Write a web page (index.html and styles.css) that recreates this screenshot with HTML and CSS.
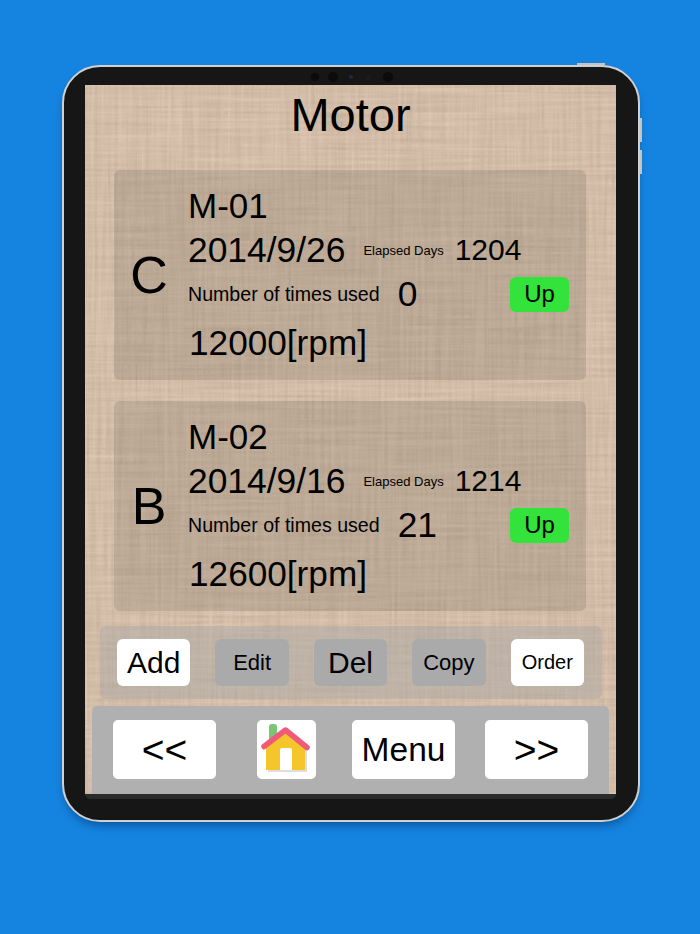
FILE: index.html
```html
<!DOCTYPE html>
<html lang="en">
<head>
    <meta charset="UTF-8">
    <meta name="viewport" content="width=device-width, initial-scale=1.0">
    <title>Motor</title>
    <link rel="stylesheet" href="styles.css">
</head>
<body>
    <div class="device">
        <div class="side-btn side-btn-top"></div>
        <div class="side-btn side-btn-a"></div>
        <div class="side-btn side-btn-b"></div>
        <div class="cameras">
            <span class="cam"></span>
            <span class="cam cam-big"></span>
            <span class="cam cam-small"></span>
            <span class="cam cam-faint"></span>
            <span class="cam cam-big cam-last"></span>
        </div>
        <div class="screen">
            <svg class="linen" width="531" height="709" aria-hidden="true">
                <filter id="weave" x="0" y="0" width="100%" height="100%">
                    <feTurbulence type="fractalNoise" baseFrequency="0.3 0.01" numOctaves="3" seed="4" result="v"/>
                    <feTurbulence type="fractalNoise" baseFrequency="0.01 0.3" numOctaves="3" seed="9" result="h"/>
                    <feBlend in="v" in2="h" mode="multiply"/>
                    <feGaussianBlur stdDeviation="0.7"/>
                    <feColorMatrix type="matrix" values="0 0 0 0 0.42  0 0 0 0 0.32  0 0 0 0 0.22  0.75 0 0 0.2 -0.12"/>
                </filter>
                <rect width="531" height="709" filter="url(#weave)"/>
            </svg>
            <h1 class="title">Motor</h1>

            <div class="card">
                <div class="grade">C</div>
                <div class="info">
                    <div class="line name">M-01</div>
                    <div class="line">
                        <span class="big">2014/9/26</span>
                        <span class="elapsed-label">Elapsed Days</span>
                        <span class="elapsed">1204</span>
                    </div>
                    <div class="line">
                        <span class="used-label">Number of times used</span>
                        <span class="big used">0</span>
                        <button class="up">Up</button>
                    </div>
                    <div class="line rpm">12000[rpm]</div>
                </div>
            </div>

            <div class="card">
                <div class="grade">B</div>
                <div class="info">
                    <div class="line name">M-02</div>
                    <div class="line">
                        <span class="big">2014/9/16</span>
                        <span class="elapsed-label">Elapsed Days</span>
                        <span class="elapsed">1214</span>
                    </div>
                    <div class="line">
                        <span class="used-label">Number of times used</span>
                        <span class="big used">21</span>
                        <button class="up">Up</button>
                    </div>
                    <div class="line rpm">12600[rpm]</div>
                </div>
            </div>

            <div class="tools">
                <button class="tool on fs-30">Add</button>
                <button class="tool fs-22">Edit</button>
                <button class="tool fs-30">Del</button>
                <button class="tool fs-22">Copy</button>
                <button class="tool on fs-20">Order</button>
            </div>

            <div class="nav">
                <button class="nav-btn arrows">&lt;&lt;</button>
                <button class="nav-btn home">
                    <svg width="59" height="59" viewBox="0 0 59 59">
                        <rect x="12" y="4" width="8" height="20" rx="3" fill="#7cc576"/>
                        <path d="M11 29 L30 13 L50 29 V52 H11 Z" fill="#dedede"/>
                        <path d="M9 27 L28.5 11 L48 27 V50 H9 Z" fill="#f5c52c"/>
                        <path d="M23 50 V30 Q23 28 25 28 H33 Q35 28 35 30 V50 Z" fill="#fff"/>
                        <path d="M7 26.5 L28.5 10 L50 27.5" fill="none" stroke="#ee5a78" stroke-width="5.5" stroke-linecap="round" stroke-linejoin="round"/>
                    </svg>
                </button>
                <button class="nav-btn menu">Menu</button>
                <button class="nav-btn arrows">&gt;&gt;</button>
            </div>
        </div>
        <div class="strip"></div>
    </div>
</body>
</html>
```

FILE: styles.css
```css
* {
    box-sizing: border-box;
}
html, body {
    height: 100%;
}
body {
    margin: 0;
    background-color: #1584e0;
    font-family: "Liberation Sans", Arial, sans-serif;
    color: #000;
    overflow: hidden;
}
button {
    font-family: inherit;
    color: #000;
    border: none;
    padding: 0;
}
.device {
    position: relative;
    width: 578px;
    height: 757px;
    margin: 65px 0 0 62px;
    padding: 18px 22px 0 21px;
    background-color: #161616;
    border: 2px solid #d0d0d0;
    border-radius: 38px;
    box-shadow: 0 6px 8px -2px rgba(0, 40, 90, 0.45);
}
.side-btn {
    position: absolute;
    background-color: #c4c4c4;
}
.side-btn-top {
    top: -4px;
    left: 513px;
    width: 28px;
    height: 2px;
}
.side-btn-a {
    top: 51px;
    right: -4px;
    width: 2px;
    height: 24px;
}
.side-btn-b {
    top: 83px;
    right: -4px;
    width: 2px;
    height: 24px;
}
.cameras {
    position: absolute;
    top: 3px;
    left: 247px;
    display: flex;
    align-items: center;
    height: 14px;
}
.cam {
    width: 8px;
    height: 8px;
    border-radius: 50%;
    background-color: #0b0b0b;
}
.cam-big {
    width: 10px;
    height: 10px;
    margin-left: 9px;
}
.cam-small {
    width: 4px;
    height: 4px;
    margin-left: 11px;
    background-color: #1f2c3c;
}
.cam-faint {
    width: 5px;
    height: 5px;
    margin-left: 13px;
    background-color: #1c1c1c;
}
.cam-last {
    margin-left: 12px;
}
.screen {
    position: relative;
    width: 531px;
    height: 709px;
    overflow: hidden;
    background-color: #e6cfbc;
}
.linen {
    position: absolute;
    top: 0;
    left: 0;
}
.title {
    position: relative;
    margin: 0;
    height: 85px;
    padding-top: 2px;
    font-size: 47px;
    font-weight: normal;
    line-height: 56px;
    text-align: center;
}
.card {
    position: relative;
    display: flex;
    width: 472px;
    height: 210px;
    margin: 0 0 21px 29px;
    padding-top: 14px;
    background-color: rgba(110, 100, 85, 0.22);
    border-radius: 6px;
}
.grade {
    width: 74px;
    margin-top: -14px;
    padding-right: 4px;
    font-size: 52px;
    line-height: 210px;
    text-align: center;
}
.info {
    flex: 1;
    padding-right: 17px;
}
.line {
    display: flex;
    align-items: center;
    height: 44px;
}
.name {
    font-size: 35px;
}
.big {
    font-size: 35.4px;
}
.rpm {
    height: 48px;
    margin-top: 3px;
    padding-left: 1px;
    font-size: 35.2px;
}
.elapsed-label {
    margin-left: 18px;
    font-size: 13px;
}
.elapsed {
    margin-left: 11px;
    font-size: 30px;
}
.used-label {
    font-size: 19.6px;
}
.used {
    margin-left: 18px;
}
.up {
    width: 59px;
    height: 35px;
    margin-left: auto;
    font-size: 24px;
    background-color: #33e23a;
    border-radius: 6px;
}
.tools {
    position: relative;
    display: flex;
    align-items: center;
    gap: 25px;
    width: 502px;
    height: 73px;
    margin: -6px 0 7px 15px;
    padding: 0 0 0 17px;
    background-color: rgba(165, 165, 165, 0.42);
    border-radius: 6px;
}
.tool {
    width: 73.4px;
    height: 47px;
    background-color: #aaa;
    border-radius: 6px;
}
.tool.on {
    background-color: #fff;
}
.fs-30 {
    font-size: 30px;
}
.fs-22 {
    font-size: 22px;
}
.fs-20 {
    font-size: 20px;
}
.nav {
    position: relative;
    display: flex;
    align-items: flex-start;
    width: 517px;
    height: 88px;
    margin-left: 7px;
    padding: 14px 21px 0;
    gap: 41px;
    background-color: #b0b0b0;
    border-radius: 5px 5px 0 0;
}
.nav-btn {
    width: 103px;
    height: 59px;
    background-color: #fff;
    border-radius: 5px;
}
.arrows {
    font-size: 39px;
}
.menu {
    margin-left: -5px;
    margin-right: -11px;
    font-size: 33.5px;
}
.home {
    width: 59px;
    display: flex;
    padding: 0;
}
.strip {
    height: 5px;
    background-color: #2b2b2b;
    border-radius: 0 0 8px 8px;
}
```
